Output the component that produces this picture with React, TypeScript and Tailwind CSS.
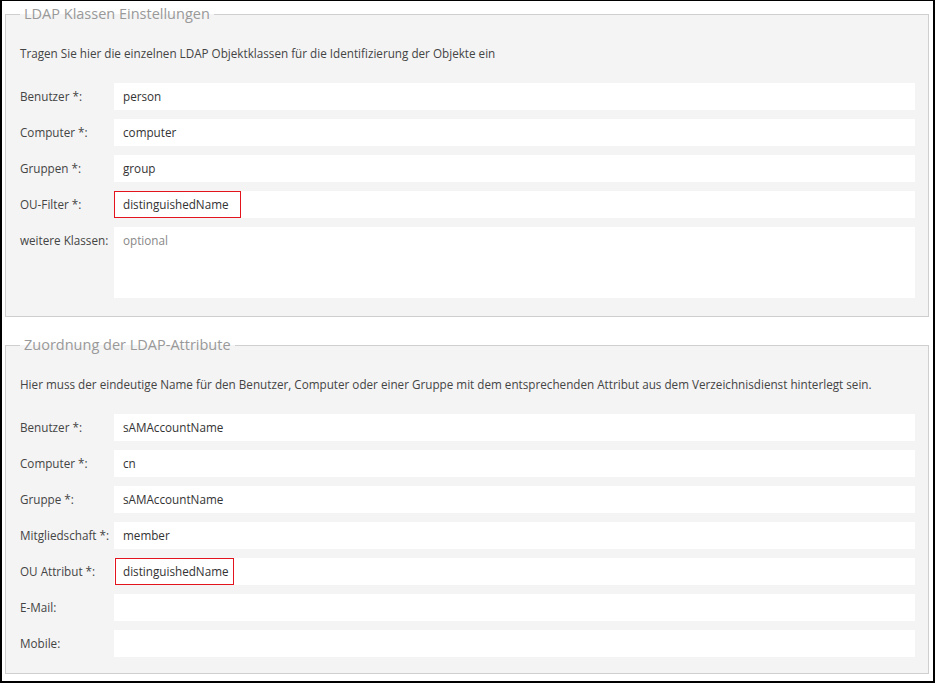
import React from 'react';

type Row = { label: string; value?: string; mark?: string; tall?: boolean; placeholder?: string };

const klassen: Row[] = [
  { label: 'Benutzer *:', value: 'person' },
  { label: 'Computer *:', value: 'computer' },
  { label: 'Gruppen *:', value: 'group' },
  { label: 'OU-Filter *:', value: 'distinguishedName', mark: 'left-0 w-[127px]' },
  { label: 'weitere Klassen:', tall: true, placeholder: 'optional' },
];

const attribute: Row[] = [
  { label: 'Benutzer *:', value: 'sAMAccountName' },
  { label: 'Computer *:', value: 'cn' },
  { label: 'Gruppe *:', value: 'sAMAccountName' },
  { label: 'Mitgliedschaft *:', value: 'member' },
  { label: 'OU Attribut *:', value: 'distinguishedName', mark: 'left-[1px] w-[119px]' },
  { label: 'E-Mail:' },
  { label: 'Mobile:' },
];

const FieldRow = ({ row }: { row: Row }) => (
  <div className="flex">
    <div className="w-[94px] shrink-0 text-[11.7px] text-[#444] leading-[27px] whitespace-nowrap">{row.label}</div>
    <div className={`relative flex-1 bg-white ${row.tall ? 'h-[71px]' : 'h-[27px]'} pl-[9px] text-[11.7px] leading-[27px] text-[#333]`}>
      {row.mark && <span className={`absolute top-0 h-[27px] border border-[#e3141d] ${row.mark}`} />}
      {row.value}
      {row.placeholder && <span className="text-[#888]">{row.placeholder}</span>}
    </div>
  </div>
);

const Section = ({ title, text, rows, className }: { title: string; text: string; rows: Row[]; className: string }) => (
  <fieldset className={`border border-[#cfcfcf] bg-[#f4f4f4] pl-[14px] pr-[13px] ${className}`}>
    <legend className="px-[4px] text-[14.5px] leading-[20px] text-[#999]">{title}</legend>
    <p className="mt-[19px] text-[11.7px] leading-[20px] text-[#444]">{text}</p>
    <div className="mt-[20px] flex flex-col gap-[9px]">
      {rows.map((r) => (
        <FieldRow key={r.label} row={r} />
      ))}
    </div>
  </fieldset>
);

export default function App() {
  return (
    <div
      className="w-[935px] h-[683px] overflow-hidden border-t border-l-2 border-r-2 border-b-2 border-black bg-white"
      style={{ fontFamily: '"Open Sans", "Noto Sans", sans-serif' }}
    >
      <Section
        className="mt-[3px] ml-[3px] mr-[4px] pb-[18px]"
        title="LDAP Klassen Einstellungen"
        text="Tragen Sie hier die einzelnen LDAP Objektklassen für die Identifizierung der Objekte ein"
        rows={klassen}
      />
      <Section
        className="mt-[18px] ml-[3px] mr-[4px] pb-[16px]"
        title="Zuordnung der LDAP-Attribute"
        text="Hier muss der eindeutige Name für den Benutzer, Computer oder einer Gruppe mit dem entsprechenden Attribut aus dem Verzeichnisdienst hinterlegt sein."
        rows={attribute}
      />
    </div>
  );
}
